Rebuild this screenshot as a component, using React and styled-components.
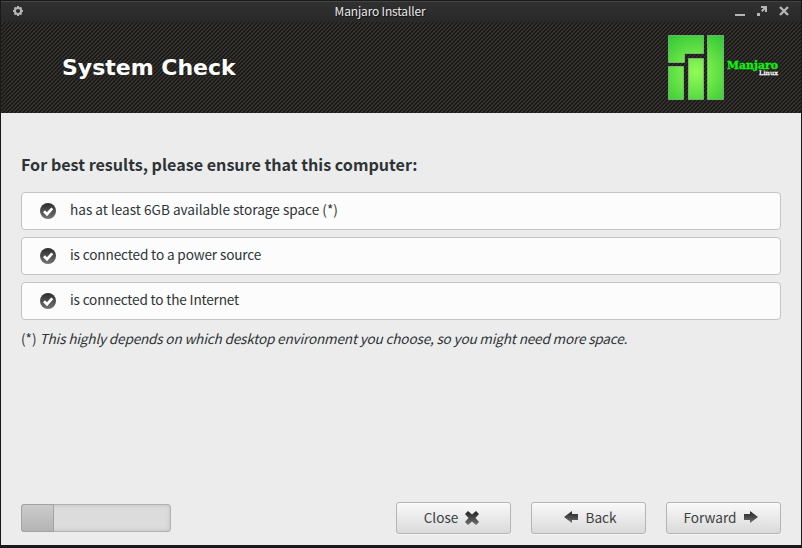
import React from 'react';
import styled, { createGlobalStyle } from 'styled-components';

const Global = createGlobalStyle`
  * { box-sizing: border-box; }
  body { margin: 0; overflow: hidden; }
`;

const Window = styled.div`
  width: 802px;
  height: 548px;
  display: flex;
  flex-direction: column;
  background: #ececec;
  border: solid #1a191a;
  border-width: 1px 1px 3px;
  font-family: "Noto Sans CJK SC", "Noto Sans", sans-serif;
  color: #2e3436;
`;

const TitleBar = styled.header`
  height: 21px;
  flex: none;
  display: grid;
  grid-template-columns: 38px 1fr 80px;
  align-items: center;
  background: linear-gradient(#303030, #292929);
  border-top: 1px solid #454545;
  padding: 0 9px 2px 9px;
`;

const WindowTitle = styled.span`
  font: 12px/18px "Noto Sans CJK SC", sans-serif;
  letter-spacing: -0.17px;
  color: #e8e8e8;
  text-shadow: 1px 1px #111;
  text-align: center;
  white-space: nowrap;
`;

const WindowControls = styled.div`
  display: flex;
  justify-content: flex-end;
  gap: 6px;
`;

const Icon = styled.svg`
  display: block;
  flex: none;
`;

const Banner = styled.div`
  height: 91px;
  flex: none;
  display: flex;
  align-items: center;
  justify-content: space-between;
  padding: 0 18px 0 61px;
  background: repeating-linear-gradient(135deg, #1c1a19 0 1.414px, #33312e 1.414px 2.828px);
`;

const PageTitle = styled.h1`
  margin: 0;
  font: bold 22px/28px "DejaVu Sans", sans-serif;
  color: #fff;
  white-space: nowrap;
`;

const Content = styled.main`
  flex: 1;
  padding: 38px 20px 0;
`;

const Heading = styled.h2`
  margin: 0 0 14px;
  font-size: 16.13px;
  line-height: 27px;
  font-weight: bold;
  white-space: nowrap;
`;

const Requirements = styled.ul`
  margin: 0;
  padding: 0;
  list-style: none;
  display: grid;
  gap: 7px;
`;

const Requirement = styled.li`
  height: 38px;
  display: flex;
  align-items: center;
  gap: 14px;
  padding-left: 18px;
  background: #fcfcfc;
  border: 1px solid #c4c4c4;
  border-radius: 4px;
  font-size: 13.6px;
  line-height: 20px;
`;

const Label = styled.span`
  padding-bottom: 4px;
  letter-spacing: ${({ $spacing }) => $spacing}px;
  white-space: nowrap;
`;

const Note = styled.p`
  margin: 8px 0 0;
  font-size: 13.6px;
  line-height: 20px;
  white-space: nowrap;

  em {
    letter-spacing: -0.185px;
  }
`;

const Footer = styled.footer`
  height: 43px;
  flex: none;
  display: flex;
  padding: 0 20px;
  gap: 20px;
`;

const ProgressTrack = styled.div`
  width: 150px;
  height: 28px;
  margin: 2px auto 0 0;
  background: #dcdcdc;
  border: 1px solid #b2b2b2;
  border-radius: 3px;
  box-shadow: inset 0 0 4px #bcbcbc;
`;

const ProgressFill = styled.div`
  width: 33px;
  height: 28px;
  margin: -1px;
  background: linear-gradient(#cbcbcb, #b4b4b4);
  border: 1px solid #a3a3a3;
  border-radius: 3px 1px 1px 3px;
`;

const Button = styled.button`
  width: 115px;
  height: 32px;
  display: flex;
  align-items: center;
  justify-content: center;
  gap: ${({ $gap = 6 }) => $gap}px;
  padding: ${({ $padding = '0 3px 0 0' }) => $padding};
  background: linear-gradient(#f9f9f9, #dadada);
  border: 1px solid #b5b5b5;
  border-radius: 3px;
  box-shadow: inset 0 1px #fff8, 0 1px #f4f4f4;
  font: 13.6px/20px "Noto Sans CJK SC", sans-serif;
  color: #3b4042;
`;

const ButtonText = styled.span`
  padding-bottom: 2px;
`;

const LogoWrap = styled.div`
  display: flex;
  width: 115px;
`;

const GearIcon = () => (
  <Icon width="16" height="16" viewBox="0 0 16 16">
    <circle cx="8" cy="8" r="3.1" fill="none" stroke="#b5b5b5" strokeWidth="2" />
    <path d="M8 3v2M8 11v2M3 8h2M11 8h2M4.5 4.5l1.4 1.4M10.1 10.1l1.4 1.4M4.5 11.5l1.4-1.4M10.1 5.9l1.4-1.4" stroke="#b5b5b5" strokeWidth="2" />
  </Icon>
);

const MinimizeIcon = () => (
  <Icon width="16" height="16"><path d="M3 11h10v2H3z" fill="#b5b5b5" /></Icon>
);

const MaximizeIcon = () => (
  <Icon width="16" height="16">
    <path d="M3 10h3v3H3zM7 3h6v6h-2V6.500L8.500 9 7 7.500 9.500 5H7z" fill="#b5b5b5" />
  </Icon>
);

const CloseWindowIcon = () => (
  <Icon width="16" height="16"><path d="M4 4l8 8M12 4l-8 8" stroke="#b5b5b5" strokeWidth="2.4" /></Icon>
);

const CheckIcon = () => (
  <Icon width="16" height="16" viewBox="0 0 16 16">
    <defs>
      <linearGradient id="check" x2="0" y2="1">
        <stop stopColor="#2b2b2b" /><stop offset="1" stopColor="#747474" />
      </linearGradient>
    </defs>
    <circle cx="8" cy="8" r="8" fill="url(#check)" />
    <path d="M4 8.200l3 3 5.300-5.800" fill="none" stroke="#fff" strokeWidth="2.700" />
  </Icon>
);

const glyphs = {
  close: 'M1 4l3-3 4 3.500L12 1l3 3-3.500 4 3.500 4-3 3-4-3.500L4 15l-3-3 3.500-4z',
  back: 'M1 7l8-6v3h6v6H9v3z',
  forward: 'M15 7L7 1v3H1v6h6v3z',
};

const ButtonGlyph = ({ name }) => (
  <Icon width="16" height="16" viewBox="0 0 16 16">
    <defs>
      <linearGradient id={name} x2="0" y2="1">
        <stop stopColor="#222" /><stop offset="1" stopColor="#707070" />
      </linearGradient>
    </defs>
    <path d={glyphs[name]} fill={`url(#${name})`} />
  </Icon>
);

const Logo = () => (
  <LogoWrap>
    <Icon width="115" height="66" viewBox="0 0 115 66">
      <defs>
        <radialGradient id="leaf" gradientUnits="userSpaceOnUse" cx="28" cy="37" r="43">
          <stop stopColor="#93fb55" /><stop offset="1" stopColor="#35c936" />
        </radialGradient>
      </defs>
      <g fill="url(#leaf)" stroke="#8fd08d" strokeOpacity=".65">
        <path d="M.5.5h35v18h-19v9H.5zM.5 31.500h15v33H.5zM20.500 23.500h15v41h-15zM39.500.5h16v64h-16z" />
      </g>
      <text x="59" y="34" textLength="51" lengthAdjust="spacingAndGlyphs" fontFamily="DejaVu Serif, serif" fontWeight="bold" fontSize="11.5" fill="#10f010" stroke="#10f010" strokeWidth=".4">Manjaro</text>
      <text x="91" y="40" textLength="19" lengthAdjust="spacingAndGlyphs" fontFamily="DejaVu Serif, serif" fontSize="6" fill="#fff" stroke="#fff" strokeWidth=".3">Linux</text>
    </Icon>
  </LogoWrap>
);

const requirements = [
  { text: 'has at least 6GB available storage space (*)', spacing: 0 },
  { text: 'is connected to a power source', spacing: -0.13 },
  { text: 'is connected to the Internet', spacing: -0.17 },
];

export default function App() {
  return (
    <>
      <Global />
      <Window>
        <TitleBar>
          <GearIcon />
          <WindowTitle>Manjaro Installer</WindowTitle>
          <WindowControls><MinimizeIcon /><MaximizeIcon /><CloseWindowIcon /></WindowControls>
        </TitleBar>
        <Banner>
          <PageTitle>System Check</PageTitle>
          <Logo />
        </Banner>
        <Content>
          <Heading>For best results, please ensure that this computer:</Heading>
          <Requirements>
            {requirements.map(({ text, spacing }) => (
              <Requirement key={text}><CheckIcon /><Label $spacing={spacing}>{text}</Label></Requirement>
            ))}
          </Requirements>
          <Note>(*) <em>This highly depends on which desktop environment you choose, so you might need more space.</em></Note>
        </Content>
        <Footer>
          <ProgressTrack><ProgressFill /></ProgressTrack>
          <Button><ButtonText>Close</ButtonText><ButtonGlyph name="close" /></Button>
          <Button $padding="0 0 0 3px"><ButtonGlyph name="back" /><ButtonText>Back</ButtonText></Button>
          <Button $padding="0 5px 0 0"><ButtonText>Forward</ButtonText><ButtonGlyph name="forward" /></Button>
        </Footer>
      </Window>
    </>
  );
}
